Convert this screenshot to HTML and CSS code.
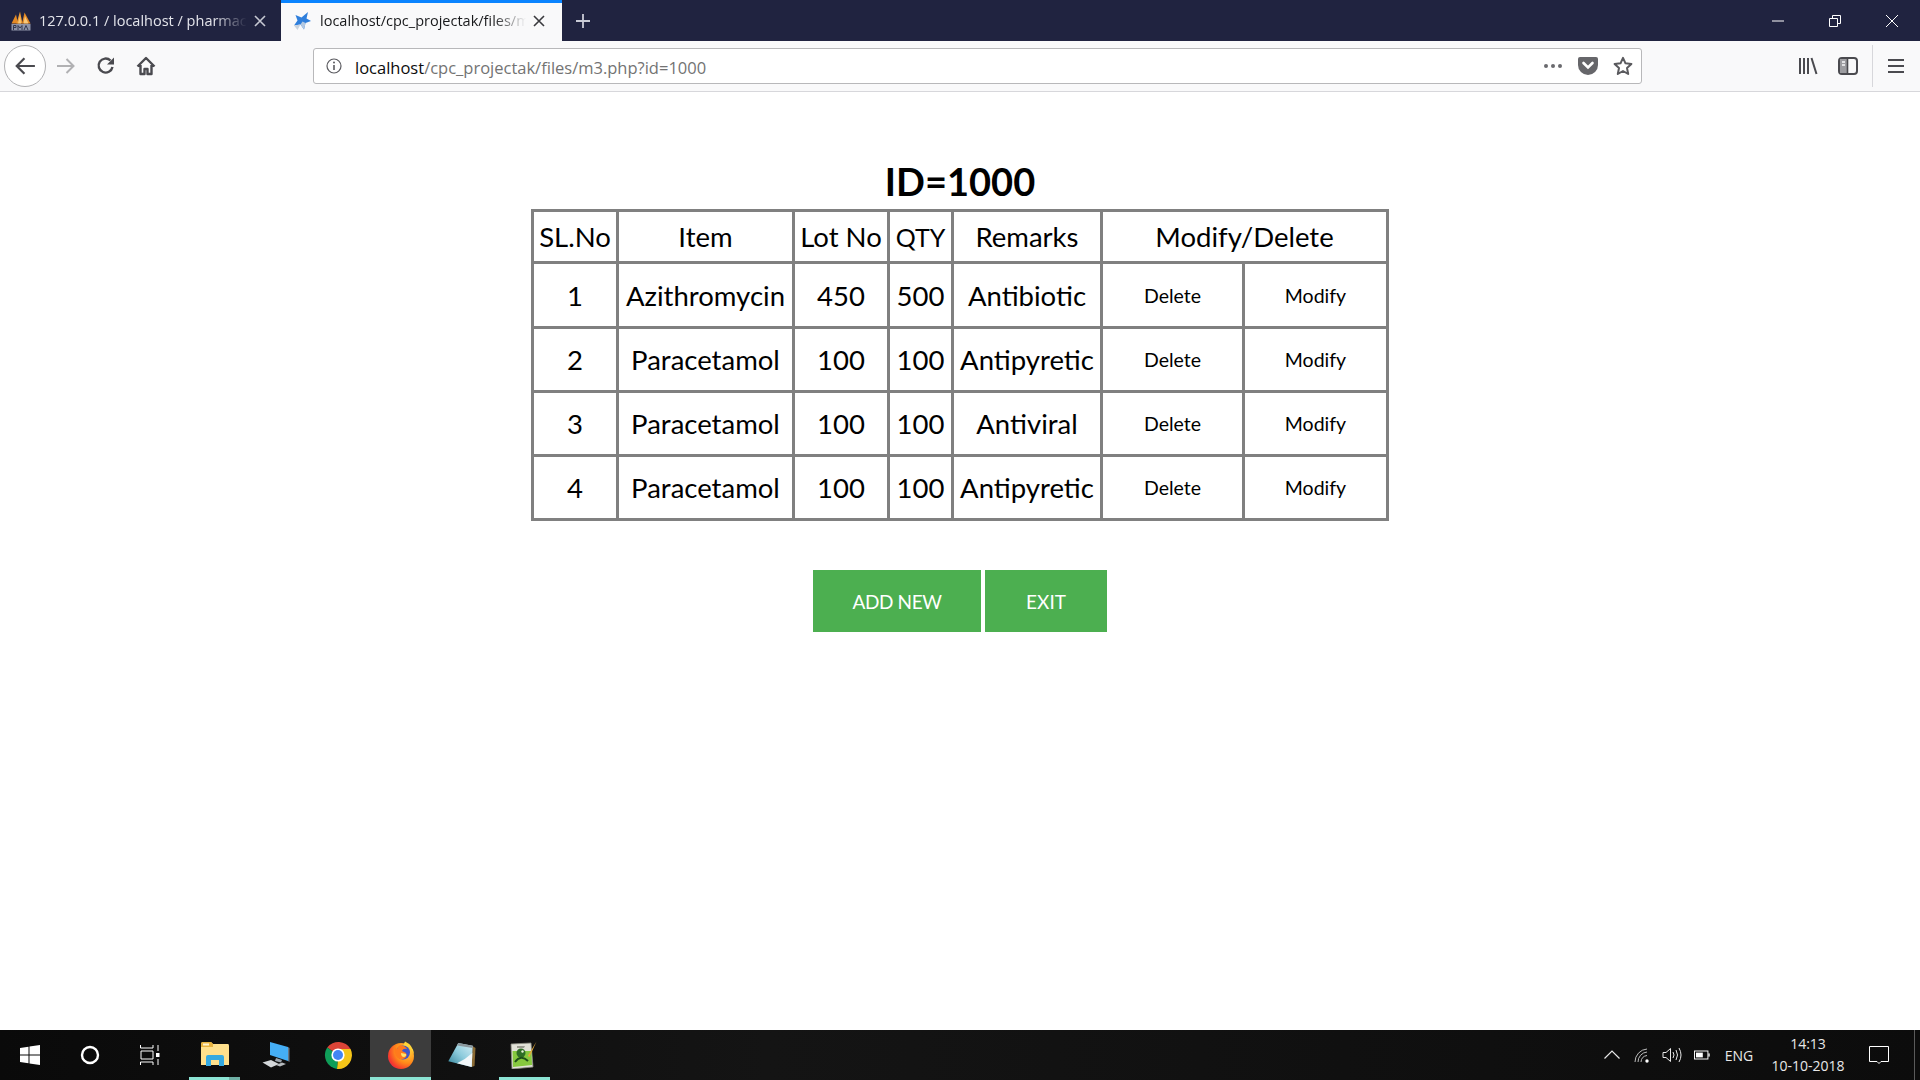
FILE: index.html
```html
<!DOCTYPE html>
<html lang="en">
<head>
  <meta charset="UTF-8" />
  <title>localhost/cpc_projectak/files/m3.php?id=1000</title>
  <link rel="stylesheet" href="styles.css">
</head>
<body>
  <div class="tabbar">
    <div class="tab">
      <svg class="favicon" viewBox="0 0 20 20">
        <path d="M0.5 12.5 L5 3.5 L7 12.5 Z" fill="#e58a24"/>
        <path d="M5.5 12.5 L9 0.5 L11.5 12.5 Z" fill="#ee9c34"/>
        <path d="M11 12.5 L13.5 1.5 L19.5 12.5 Z" fill="#e58a24"/>
        <path d="M12.5 12.5 L14 5 L17.5 12.5 Z" fill="#f9c878"/>
        <path d="M7 12.5 L9 5 L10 12.5 Z" fill="#f9c878"/>
        <rect x="0.5" y="13" width="19" height="6.5" fill="#8d93a8"/>
        <path d="M2.5 19 V14.5 H5 V16.5 H3 M7 19 V14.5 L9 17 L11 14.5 V19 M13 19 L15 14.5 L17 19" fill="none" stroke="#34394f" stroke-width="1"/>
      </svg>
      <span class="tab-label">127.0.0.1 / localhost / pharmacy</span>
      <svg class="tab-close" viewBox="0 0 12 12"><path d="M1 1 L11 11 M11 1 L1 11" stroke="#c6c8d2" stroke-width="1.6"/></svg>
    </div>
    <div class="tab tab-active">
      <svg class="favicon" viewBox="0 0 20 20">
        <path d="M16 1 L14.5 7.5 L19 10 L13.5 12 L12 18.5 L8.5 13.5 L2 14.5 L5.5 9.5 L3.5 4 L9.5 6.5 Z" fill="#2f7fdc"/>
        <path d="M8.5 13.5 L12 18.5 L13.5 12 L10.5 10.5 Z" fill="#b4c9e2"/>
        <path d="M2 14.5 L8.5 13.5 L5.5 19 Z" fill="#c8d2de"/>
      </svg>
      <span class="tab-label">localhost/cpc_projectak/files/m3.php?id=1000</span>
      <svg class="tab-close" viewBox="0 0 12 12"><path d="M1 1 L11 11 M11 1 L1 11" stroke="#3a3a3e" stroke-width="1.6"/></svg>
    </div>
    <svg class="new-tab" viewBox="0 0 16 16"><path d="M8 1 V15 M1 8 H15" stroke="#c9cbd6" stroke-width="1.8"/></svg>
    <div class="window-controls">
      <svg viewBox="0 0 14 14"><path d="M1 7 H13" stroke="#fff" stroke-width="1"/></svg>
      <svg viewBox="0 0 14 14"><path d="M1.5 4.5 H9.5 V12.5 H1.5 Z M4.5 4.5 V1.5 H12.5 V9.5 H9.5" fill="none" stroke="#fff" stroke-width="1"/></svg>
      <svg viewBox="0 0 14 14"><path d="M1 1 L13 13 M13 1 L1 13" stroke="#fff" stroke-width="1"/></svg>
    </div>
  </div>

  <div class="toolbar">
    <div class="back-btn">
      <svg viewBox="0 0 20 20"><path d="M19 10 H2 M9.5 3 L2.5 10 L9.5 17" fill="none" stroke="#4a4a4f" stroke-width="2"/></svg>
    </div>
    <svg class="tool-icon" viewBox="0 0 20 20"><path d="M1 10 H18 M10.5 3 L17.5 10 L10.5 17" fill="none" stroke="#b1b1b3" stroke-width="2"/></svg>
    <svg class="tool-icon" viewBox="0 0 20 20"><path d="M16.5 11 A7 7 0 1 1 14.5 4.5" fill="none" stroke="#4a4a4f" stroke-width="2.4"/><path d="M18 1.5 V8.5 H11 Z" fill="#4a4a4f"/></svg>
    <svg class="tool-icon" viewBox="0 0 20 20"><path d="M1.5 10.5 L10 2 L18.5 10.5 M4.5 9 V18 H8.5 V13 H11.5 V18 H15.5 V9" fill="none" stroke="#4a4a4f" stroke-width="2.4" stroke-linejoin="round"/></svg>
    <div class="urlbar">
      <svg class="info-icon" viewBox="0 0 16 16"><circle cx="8" cy="8" r="7" fill="none" stroke="#5b5b60" stroke-width="1.2"/><path d="M8 7 V12" stroke="#5b5b60" stroke-width="1.6"/><circle cx="8" cy="4.6" r="1" fill="#5b5b60"/></svg>
      <span class="url-text"><span class="url-host">localhost</span>/cpc_projectak/files/m3.php?id=1000</span>
      <svg class="url-dots" viewBox="0 0 20 6"><circle cx="3" cy="3" r="2" fill="#6a6a6e"/><circle cx="10" cy="3" r="2" fill="#6a6a6e"/><circle cx="17" cy="3" r="2" fill="#6a6a6e"/></svg>
      <svg class="url-pocket" viewBox="0 0 20 18"><path d="M2 0 H18 A2 2 0 0 1 20 2 V8 A10 10 0 0 1 0 8 V2 A2 2 0 0 1 2 0 Z" fill="#66666a"/><path d="M5.5 6 L10 10.5 L14.5 6" fill="none" stroke="#fff" stroke-width="2.6" stroke-linecap="round"/></svg>
      <svg class="url-star" viewBox="0 0 20 20"><path d="M10 1.8 L12.5 7.3 L18.4 8 L14 12 L15.2 18 L10 15 L4.8 18 L6 12 L1.6 8 L7.5 7.3 Z" fill="none" stroke="#5a5a5e" stroke-width="2" stroke-linejoin="round"/></svg>
    </div>
    <svg class="side-icon library" viewBox="0 0 20 18"><path d="M2 1 V17 M6 1 V17 M10 1 V17 M13.5 1 L18.5 17" fill="none" stroke="#4a4a4f" stroke-width="2"/></svg>
    <svg class="side-icon sidebar" viewBox="0 0 20 18"><rect x="1" y="1" width="18" height="16" rx="3" fill="none" stroke="#4a4a4f" stroke-width="2"/><rect x="2" y="2" width="7" height="14" fill="#9c9ca0"/><path d="M9.5 1 V17" stroke="#4a4a4f" stroke-width="1.6"/><path d="M4 5 H7 M4 8 H7" stroke="#f9f9fa" stroke-width="1.4"/></svg>
    <div class="toolbar-sep"></div>
    <svg class="side-icon menu" viewBox="0 0 16 16"><path d="M0 2 H16 M0 8 H16 M0 14 H16" stroke="#4a4a4f" stroke-width="2"/></svg>
  </div>

  <main class="page">
    <h1 class="page-title">ID=1000</h1>
    <table class="items">
      <colgroup>
        <col class="col-sl"><col class="col-item"><col class="col-lot"><col class="col-qty"><col class="col-remarks"><col class="col-del"><col class="col-mod">
      </colgroup>
      <tr class="head-row">
        <th>SL.No</th><th>Item</th><th>Lot No</th><th class="qty-head">QTY</th><th>Remarks</th><th colspan="2">Modify/Delete</th>
      </tr>
      <tr class="row-a">
        <td>1</td><td>Azithromycin</td><td>450</td><td>500</td><td>Antibiotic</td>
        <td class="action">Delete</td><td class="action">Modify</td>
      </tr>
      <tr class="row-b">
        <td>2</td><td>Paracetamol</td><td>100</td><td>100</td><td>Antipyretic</td>
        <td class="action">Delete</td><td class="action">Modify</td>
      </tr>
      <tr class="row-b">
        <td>3</td><td>Paracetamol</td><td>100</td><td>100</td><td>Antiviral</td>
        <td class="action">Delete</td><td class="action">Modify</td>
      </tr>
      <tr class="row-b">
        <td>4</td><td>Paracetamol</td><td>100</td><td>100</td><td>Antipyretic</td>
        <td class="action">Delete</td><td class="action">Modify</td>
      </tr>
    </table>
    <div class="buttons">
      <a class="btn btn-add">ADD NEW</a>
      <a class="btn btn-exit">EXIT</a>
    </div>
  </main>

  <div class="taskbar">
    <div class="task-slot">
      <svg class="sys-icon" viewBox="0 0 20 20"><path d="M0 3 L8.5 1.8 V9.5 H0 Z M9.5 1.6 L20 0 V9.5 H9.5 Z M0 10.5 H8.5 V18.2 L0 17 Z M9.5 10.5 H20 V20 L9.5 18.4 Z" fill="#fff"/></svg>
    </div>
    <div class="task-slot">
      <svg class="sys-icon" viewBox="0 0 20 20"><circle cx="10" cy="10" r="8" fill="none" stroke="#fff" stroke-width="2.4"/></svg>
    </div>
    <div class="task-slot">
      <svg class="sys-icon" viewBox="0 0 20 20"><path d="M0.5 0 V3 H13 V0 M1 6 H13 V14 H1 Z M0.5 20 V17 H13 V20 M18 0 V6 M18 14 V20" fill="none" stroke="#fff" stroke-width="1"/><rect x="16" y="8" width="3.5" height="4" fill="#fff"/></svg>
    </div>
    <div class="app app-explorer app-open">
      <svg class="app-icon" viewBox="0 0 28 28"><path d="M0 3 Q0 1 2 1 H10 L12 3 H27 Q28 3 28 5 V24 H0 Z" fill="#ffe08c"/><path d="M0 3 Q0 1 2 1 H10 L12 3 V6 H0 Z" fill="#e8b33f"/><rect x="2" y="2.5" width="6" height="2" fill="#fff4cf"/><path d="M5 25 V16 Q5 14 7 14 H21 Q23 14 23 16 V25 H18 V19 H10 V25 Z" fill="#35a9e1"/></svg>
    </div>
    <div class="app app-computer">
      <svg class="app-icon" viewBox="0 0 28 28"><path d="M8 1 L26 6 L26 20 L8 14 Z" fill="#45aef5"/><path d="M8 1 L26 6 L27.5 7 V21 L26 20 L26 6 Z" fill="#6b7682"/><path d="M14 17 L20 19 L19 21.5 L13 20 Z" fill="#9aa3ac"/><path d="M0.5 21.5 L9 19 L17 23 L9 26.5 Z" fill="#d4d7da"/><path d="M14 24 L20 21.5 L24 23 L18 25.5 Z" fill="#b7bbbf"/></svg>
    </div>
    <div class="app app-chrome">
      <svg class="app-icon" viewBox="0 0 28 28">
        <path d="M14 14 L3.2 6.5 A14 14 0 0 1 26.6 8 L14 8 Z" fill="#db4437"/>
        <path d="M14 14 L14 8 L26.6 8 A14 14 0 0 1 13 28 Z" fill="#f5c518"/>
        <path d="M14 14 L13 28 A14 14 0 0 1 3.2 6.5 Z" fill="#0f9d58"/>
        <circle cx="14" cy="14" r="6.6" fill="#fff"/><circle cx="14" cy="14" r="5" fill="#4285f4"/>
      </svg>
    </div>
    <div class="app app-active app-open">
      <svg class="app-icon" viewBox="0 0 28 28">
        <defs>
          <radialGradient id="foxfire" cx="0.75" cy="0.3" r="0.95">
            <stop offset="0" stop-color="#ffd43a"/>
            <stop offset="0.5" stop-color="#ff8a1a"/>
            <stop offset="0.8" stop-color="#f5372f"/>
            <stop offset="1" stop-color="#e0206a"/>
          </radialGradient>
        </defs>
        <circle cx="14" cy="15" r="13" fill="url(#foxfire)"/>
        <path d="M18 0.5 Q26 4 27 13 Q24 6 16 5 Z" fill="#ffd43a"/>
        <circle cx="16" cy="11.5" r="7" fill="#3d55c8"/>
        <path d="M13 4 Q19 5 20 8 Q16 7 15 10 L19 12 Q21 16 16 18 Q11 19 8.5 14 Q7 9 8 6 L10 8 Q11 5 13 4 Z" fill="#ff7a1c"/>
        <path d="M14 12 L19 13 Q20 15 17 16 Q14 16 14 12 Z" fill="#ffe36b"/>
      </svg>
    </div>
    <div class="app">
      <svg class="app-icon" viewBox="0 0 28 28">
        <defs>
          <linearGradient id="padglass" x1="0" y1="1" x2="1" y2="0">
            <stop offset="0" stop-color="#2f7f96"/>
            <stop offset="0.5" stop-color="#8ccbdc"/>
            <stop offset="1" stop-color="#d7eff6"/>
          </linearGradient>
        </defs>
        <path d="M24.5 5 L27.5 7 L26.5 25 L23.5 26 Z" fill="#8a6a34"/>
        <path d="M10.3 2 L24.7 4.7 L23.7 26 L0.3 20.3 Z" fill="url(#padglass)"/>
        <path d="M10.3 2 L24.7 4.7 L24.5 7 L9 4.5 Z" fill="#8b979c"/>
        <path d="M23.7 26 L9 22.3 Q18 18 24.3 12 Z" fill="#f2f7f9"/>
      </svg>
    </div>
    <div class="app app-open">
      <svg class="app-icon" viewBox="0 0 28 28">
        <path d="M2 3 L22 2 L24 26 L3 28 Z" fill="#e2e2d8" stroke="#8a8a80" stroke-width="0.8"/>
        <path d="M3.5 10 L22.5 10 L23 24 L4 26 Z" fill="#86c83e"/>
        <path d="M8 5 L16 5 L15 7 L8 7 Z" fill="#9a9a90"/>
        <circle cx="12" cy="12" r="4.5" fill="#2f6e26"/>
        <path d="M6 21 Q12 13 19 20" fill="none" stroke="#1f4f19" stroke-width="2"/>
        <circle cx="13.5" cy="10.5" r="1.2" fill="#e8f3d8"/>
        <path d="M27.5 0.5 L20.5 16 L18.8 15 Z" fill="#e2a93a"/>
      </svg>
    </div>
    <div class="tray">
      <div class="tray-slot"><svg class="tray-icon" viewBox="0 0 16 16"><path d="M0.5 11.5 L8 4 L15.5 11.5" fill="none" stroke="#e8e8e8" stroke-width="1.2"/></svg></div>
      <div class="tray-slot"><svg class="tray-icon" viewBox="0 0 16 16"><path d="M1 15 A13 13 0 0 1 13 2 M4 15 A10 10 0 0 1 13 5 M7 15 A7 7 0 0 1 13 8.5" fill="none" stroke="#bdbdbd" stroke-width="1"/><circle cx="13" cy="14" r="1.7" fill="#fff"/></svg></div>
      <div class="tray-slot"><svg class="tray-icon tray-volume" viewBox="0 0 20 16"><path d="M1 5.5 H4 L8.5 1.5 V14.5 L4 10.5 H1 Z" fill="none" stroke="#e8e8e8" stroke-width="1"/><path d="M11 5 Q13 8 11 11 M14 3 Q17 8 14 13 M17 1 Q21 8 17 15" fill="none" stroke="#e8e8e8" stroke-width="1"/></svg></div>
      <div class="tray-slot"><svg class="tray-icon" viewBox="0 0 20 12"><rect x="0.6" y="1" width="16.8" height="10" fill="none" stroke="#fff" stroke-width="1.2"/><rect x="2.5" y="3" width="8.5" height="6" fill="#fff"/><rect x="18" y="4" width="1.6" height="4" fill="#fff"/></svg></div>
      <div class="tray-lang">ENG</div>
      <div class="tray-clock"><div>14:13</div><div>10-10-2018</div></div>
      <div class="tray-notify"><svg class="notify-icon" viewBox="0 0 20 20"><path d="M0.5 1.5 H19.5 V16.5 H12 L10 18.5 L8 16.5 H0.5 Z" fill="none" stroke="#fff" stroke-width="1"/></svg></div>
      <div class="show-desktop"></div>
    </div>
  </div>
</body>
</html>
```

FILE: styles.css
```css
html, body {
  height: 100%;
}

body {
  margin: 0;
  display: flex;
  flex-direction: column;
  background-color: #fff;
  font-family: "Lato", "Liberation Sans", sans-serif;
  color: #000;
  overflow: hidden;
}

/* tabs */
.tabbar {
  height: 41px;
  flex: none;
  display: flex;
  background-color: #202340;
}

.tab {
  width: 281px;
  box-sizing: border-box;
  display: flex;
  align-items: center;
  padding: 0 15px 0 11px;
  color: #e3e4ea;
  font-family: "Open Sans", sans-serif;
  font-size: 14.5px;
}

.tab-active {
  background-color: #f9f9fa;
  border-top: 3px solid #0a84ff;
  padding-bottom: 3px;
  padding-right: 17px;
  color: #18191b;
}

.favicon {
  width: 20px;
  height: 20px;
  flex: none;
  margin-right: 8px;
}

.tab-label {
  flex: 1;
  overflow: hidden;
  white-space: nowrap;
  -webkit-mask-image: linear-gradient(to right, #000 84%, transparent);
  mask-image: linear-gradient(to right, #000 84%, transparent);
}

.tab-close {
  width: 12px;
  height: 12px;
  flex: none;
  margin-left: 7px;
}

.new-tab {
  width: 16px;
  height: 16px;
  align-self: center;
  margin-left: 13px;
}

.window-controls {
  margin-left: auto;
  display: flex;
  align-items: center;
  gap: 43px;
  padding-right: 21px;
}

.window-controls svg {
  width: 14px;
  height: 14px;
}

/* toolbar */
.toolbar {
  height: 51px;
  flex: none;
  box-sizing: border-box;
  display: flex;
  align-items: center;
  background-color: #f9f9fa;
  border-bottom: 1px solid #d7d7db;
  padding-left: 4px;
}

.back-btn {
  width: 42px;
  height: 42px;
  box-sizing: border-box;
  border: 1px solid #b1b1b3;
  border-radius: 50%;
  background-color: #fff;
  display: flex;
  align-items: center;
  justify-content: center;
  margin-right: 10px;
}

.back-btn svg {
  width: 22px;
  height: 22px;
}

.tool-icon {
  width: 20px;
  height: 20px;
  flex: none;
  margin-right: 20px;
}

.urlbar {
  width: 1329px;
  height: 36px;
  box-sizing: border-box;
  flex: none;
  margin-left: 137px;
  display: flex;
  align-items: center;
  background-color: #fff;
  border: 1px solid #b8b8ba;
  border-radius: 3px;
  padding-left: 12px;
  font-family: "Open Sans", sans-serif;
  font-size: 16.5px;
  color: #737373;
}

.info-icon {
  width: 16px;
  height: 16px;
  flex: none;
  margin-right: 13px;
}

.url-text {
  flex: 1;
  white-space: nowrap;
  padding-top: 2px;
}

.url-host {
  color: #0c0c0d;
}

.url-dots {
  width: 20px;
  height: 6px;
  margin-right: 15px;
}

.url-pocket {
  width: 20px;
  height: 18px;
  margin-right: 15px;
}

.url-star {
  width: 20px;
  height: 20px;
  margin-right: 8px;
}

.side-icon {
  flex: none;
}

.library {
  width: 20px;
  height: 18px;
  margin-left: 156px;
}

.sidebar {
  width: 20px;
  height: 18px;
  margin-left: 20px;
}

.toolbar-sep {
  width: 1px;
  height: 42px;
  margin-left: 14px;
  background-color: #d7d7db;
}

.menu {
  width: 16px;
  height: 16px;
  margin-left: 15px;
}

/* page */
.page {
  flex: 1;
  display: flex;
  flex-direction: column;
  align-items: center;
}

.page-title {
  margin: 62px 0 0;
  font-size: 38px;
  line-height: 55px;
  font-weight: 700;
}

.items {
  border-collapse: collapse;
  table-layout: fixed;
  width: 858px;
  font-size: 27.5px;
}

.items th,
.items td {
  border: 3px solid #808080;
  padding: 0;
  text-align: center;
  font-weight: 400;
}

.items .qty-head {
  font-size: 25px;
}

.col-sl { width: 85px; }
.col-item { width: 176px; }
.col-lot { width: 95px; }
.col-qty { width: 64px; }
.col-remarks { width: 149px; }
.col-del { width: 142px; }
.col-mod { width: 144px; }

.head-row { height: 52px; }
.row-a { height: 65px; }
.row-b { height: 64px; }

.items .action {
  font-size: 19.5px;
}

.buttons {
  display: flex;
  gap: 4px;
  margin-top: 49px;
}

.btn {
  height: 62px;
  display: flex;
  align-items: center;
  justify-content: center;
  background-color: #4caf50;
  color: #fff;
  font-size: 19px;
}

.btn-add {
  width: 168px;
  letter-spacing: -0.4px;
}

.btn-exit { width: 122px; }

/* windows taskbar */
.taskbar {
  height: 50px;
  flex: none;
  display: flex;
  background: linear-gradient(to right, #0a0a0a, #141414 40%, #0c0c0c);
}

.task-slot {
  width: 60px;
  display: flex;
  align-items: center;
  justify-content: center;
}

.sys-icon {
  width: 20px;
  height: 20px;
}

.app {
  width: 61px;
  position: relative;
  display: flex;
  align-items: center;
  justify-content: center;
}

.app-explorer {
  width: 51px;
  margin-left: 9px;
  margin-right: 6px;
}

.app-computer { width: 60px; }
.app-chrome { width: 64px; }

.app-active {
  background-color: #3c3c3c;
}

.app-open::after {
  content: "";
  position: absolute;
  left: 7px;
  right: 3px;
  bottom: 0;
  height: 3px;
  background-color: #8ce4d4;
}

.app-explorer::after {
  left: 0;
  right: 0;
  background: linear-gradient(to right, #8ce4d4 78%, #6fb0a5 78%);
}

.app-active::after {
  left: 0;
  right: 0;
}

.app-icon {
  width: 28px;
  height: 28px;
}

.tray {
  margin-left: auto;
  display: flex;
  align-items: stretch;
  color: #e8e8e8;
  font-family: "Open Sans", sans-serif;
  font-size: 14px;
}

.tray-slot {
  width: 30px;
  display: flex;
  align-items: center;
  justify-content: center;
}

.tray-icon {
  width: 16px;
  height: 16px;
}

.tray-volume {
  width: 20px;
}

.tray-lang {
  width: 44px;
  display: flex;
  align-items: center;
  justify-content: center;
}

.tray-clock {
  width: 94px;
  display: flex;
  flex-direction: column;
  justify-content: center;
  text-align: center;
  line-height: 22px;
}

.tray-notify {
  width: 48px;
  margin-right: 11px;
  display: flex;
  align-items: center;
  justify-content: center;
}

.notify-icon {
  width: 20px;
  height: 20px;
}

.show-desktop {
  width: 6px;
  border-left: 1px solid #5a5a5a;
  box-sizing: border-box;
}
```
